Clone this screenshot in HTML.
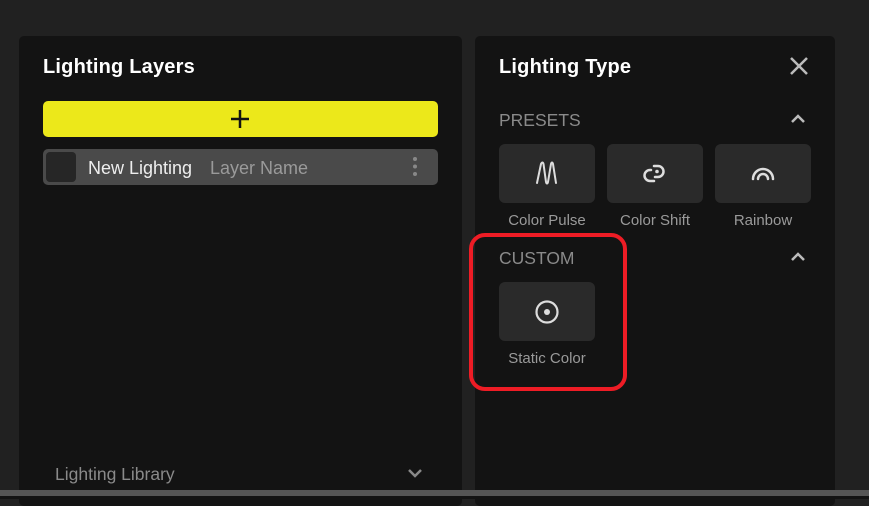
<!DOCTYPE html>
<html><head><style>
body{margin:0;width:869px;height:499px;background:#212121;position:relative;overflow:hidden;font-family:"Liberation Sans",sans-serif}
.a{position:absolute}
.p{background:#131313;border-radius:5px}
.t{color:#fff;font-size:20px;font-weight:bold;letter-spacing:0.2px}
.tile{background:#2a2a2a;border-radius:6px;width:96px;height:59px;top:144px}
.lbl{color:#9a9a9a;font-size:15px;width:96px;text-align:center;top:212px}
.sec{color:#8a8a8a;font-size:17.5px}
</style></head><body>
<div class="a p" style="left:19px;top:36px;width:443px;height:470px"></div>
<div class="a p" style="left:475px;top:36px;width:360px;height:470px"></div>
<div class="a" style="left:0;top:490px;width:869px;height:6px;background:#555"></div>
<div class="a" style="left:0;top:496px;width:869px;height:3px;background:#131313"></div>

<div class="a t" style="left:43px;top:56px">Lighting Layers</div>
<div class="a" style="left:43px;top:101px;width:395px;height:36px;background:#ece81a;border-radius:5px"></div>
<svg class="a" style="left:230px;top:109px" width="20" height="20"><path d="M10 1V19M1 10H19" stroke="#111" stroke-width="2.5"/></svg>
<div class="a" style="left:43px;top:149px;width:395px;height:36px;background:#4a4a4a;border-radius:5px"></div>
<div class="a" style="left:46px;top:152px;width:30px;height:30px;background:#262626;border-radius:4px"></div>
<div class="a" style="left:88px;top:158px;color:#eee;font-size:18px">New Lighting</div>
<div class="a" style="left:210px;top:158px;color:#9a9a9a;font-size:18px">Layer Name</div>
<svg class="a" style="left:411px;top:156px" width="8" height="22"><circle cx="4" cy="3" r="2" fill="#888"/><circle cx="4" cy="10.5" r="2" fill="#888"/><circle cx="4" cy="18" r="2" fill="#888"/></svg>
<div class="a sec" style="left:55px;top:464px">Lighting Library</div>
<svg class="a" style="left:407px;top:467px" width="16" height="12"><path d="M2 3L8 9L14 3" stroke="#888" stroke-width="2.5" fill="none"/></svg>

<div class="a t" style="left:499px;top:56px">Lighting Type</div>
<svg class="a" style="left:789px;top:56px" width="20" height="20"><path d="M2 2L18 18M18 2L2 18" stroke="#bbb" stroke-width="2.5"/></svg>
<div class="a sec" style="left:499px;top:110px">PRESETS</div>
<svg class="a" style="left:790px;top:113px" width="16" height="12"><path d="M2 9L8 3L14 9" stroke="#bbb" stroke-width="2.5" fill="none"/></svg>
<div class="a tile" style="left:499px"></div>
<div class="a tile" style="left:607px"></div>
<div class="a tile" style="left:715px"></div>
<svg class="a" style="left:534px;top:160px" width="26" height="26"><path d="M3 23L7 4C8 2 9 2 9.5 4L12 22C12.5 24 13.5 24 14 22L17 4C17.5 2 18.5 2 19 4L22 23" stroke="#ddd" stroke-width="2" fill="none" stroke-linecap="round"/></svg>
<svg class="a" style="left:641px;top:160px" width="26" height="26"><path d="M10 10H9a5.5 5.5 0 0 0 0 11h4M14 17h3a5.5 5.5 0 0 0 0-11h-4" stroke="#ddd" stroke-width="2.5" fill="none" stroke-linecap="round"/><circle cx="16" cy="11.5" r="1.8" fill="#ddd"/></svg>
<svg class="a" style="left:749px;top:160px" width="28" height="26"><path d="M4 19a10 10 0 0 1 20 0M9 19a5 5 0 0 1 10 0" stroke="#ddd" stroke-width="2.5" fill="none" stroke-linecap="round"/></svg>
<div class="a lbl" style="left:499px">Color Pulse</div>
<div class="a lbl" style="left:607px">Color Shift</div>
<div class="a lbl" style="left:715px">Rainbow</div>

<div class="a sec" style="left:499px;top:248px">CUSTOM</div>
<svg class="a" style="left:790px;top:251px" width="16" height="12"><path d="M2 9L8 3L14 9" stroke="#bbb" stroke-width="2.5" fill="none"/></svg>
<div class="a tile" style="left:499px;top:282px"></div>
<svg class="a" style="left:534px;top:299px" width="26" height="26"><circle cx="13" cy="13" r="10.5" stroke="#ddd" stroke-width="2.2" fill="none"/><circle cx="13" cy="13" r="3" fill="#ddd"/></svg>
<div class="a lbl" style="left:499px;top:350px">Static Color</div>
<div class="a" style="left:469px;top:233px;width:150px;height:150px;border:4px solid #ee1c25;border-radius:16px"></div>
</body></html>
